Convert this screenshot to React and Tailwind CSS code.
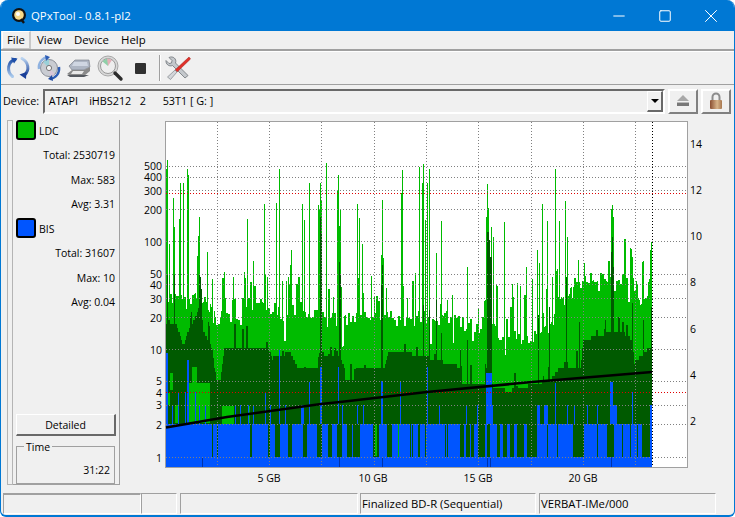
import { Minus, Square, X } from "lucide-react";

const FONT = "font-['Open_Sans','Noto_Sans',sans-serif]";

// zoom crops were read at 3x, these turn crop coords back into page coords
const z6 = (a) => a.map(([x, y]) => [160 + x / 3, 120 + y / 3]);
const z8 = (a) => a.map(([x, y]) => [420 + x / 3, 120 + y / 3]);
const z11 = (a) => a.map(([x, y]) => [318 + x / 3, 150 + y / 3]);

const brightSpikes = [
  ...z6([[22, 120], [18, 148], [20, 148], [28, 372], [40, 235], [43, 320], [58, 297], [61, 190], [70, 190], [82, 148], [85, 165], [112, 408], [118, 290], [115, 348], [142, 397], [140, 465], [155, 478], [193, 457], [220, 472], [253, 457], [262, 297], [280, 423], [313, 252], [320, 470], [349, 250], [358, 148], [366, 483], [378, 483], [385, 472], [390, 435], [394, 390], [427, 252], [433, 300], [448, 190], [475, 255], [478, 270], [481, 190], [484, 240], [499, 130], [533, 210], [535, 165], [538, 318]]),
  ...z11([[7, 100], [25, 40], [45, 440], [58, 120], [61, 75], [64, 230], [66, 178], [118, 162], [121, 385], [124, 205], [133, 282], [136, 428], [160, 378], [168, 440], [190, 315], [193, 150], [196, 325], [205, 415], [248, 130], [253, 60], [268, 445], [290, 370], [304, 52], [313, 98], [316, 42], [328, 100]]),
  ...z8([[7, 190], [10, 133], [15, 300], [20, 190], [28, 148], [49, 400], [64, 303], [80, 540], [97, 525], [142, 442], [173, 565], [198, 290], [202, 193], [205, 265], [212, 320], [218, 350], [253, 307], [275, 492], [290, 490], [300, 497], [318, 442], [335, 478], [352, 390], [358, 430], [367, 253], [380, 303], [397, 470], [406, 148], [418, 303], [436, 243], [440, 350], [460, 500], [475, 420], [492, 428], [572, 268], [575, 255], [578, 290], [636, 410], [670, 433], [690, 390], [693, 365]]),
];

const darkSpikes = [
  ...z6([[20, 465], [43, 465], [118, 465], [480, 290], [482, 340], [538, 425]]),
  ...z8([[10, 555], [28, 570], [48, 540], [64, 640], [142, 660], [200, 335], [203, 335], [206, 360], [209, 410], [212, 410], [355, 585], [388, 560], [438, 470], [478, 605], [555, 600], [572, 395], [575, 350], [578, 440], [636, 550], [670, 600], [693, 560]]),
  ...z11([[7, 200], [10, 250], [64, 335], [66, 375], [190, 405], [193, 345]]),
];

const brightTop = [[166, 295], [175, 298], [190, 297], [205, 295], [212, 310], [215, 328], [219, 328], [222, 308], [250, 305], [262, 307], [268, 313], [290, 313], [305, 312], [320, 318], [340, 322], [360, 318], [400, 318], [430, 318], [460, 322], [484, 325], [490, 320], [500, 338], [540, 338], [550, 325], [560, 305], [570, 288], [585, 280], [600, 278], [635, 285], [640, 298], [645, 295], [652, 275]];

const darkTop = [[166, 325], [176, 325], [183, 345], [188, 330], [196, 315], [200, 300], [203, 332], [210, 345], [212, 352], [216, 380], [220, 380], [222, 362], [224, 349], [268, 349], [272, 358], [290, 352], [297, 367], [318, 367], [322, 355], [340, 358], [344, 368], [345, 381], [355, 381], [356, 367], [384, 367], [388, 350], [418, 355], [460, 367], [461, 382], [484, 382], [485, 365], [490, 385], [510, 392], [530, 385], [550, 380], [557, 370], [580, 368], [583, 340], [612, 332], [620, 330], [632, 340], [634, 362], [652, 345]];

// columns of bright green that sit in front of the dark area, left of the scan
const z7r = (x0, x1, y0, y1) => [160 + x0 / 3, 160 + x1 / 3, 290 + y0 / 3, 290 + y1 / 3];
const brightBlocks = [
  z7r(30, 40, 250, 300), z7r(20, 30, 310, 345), z7r(45, 55, 345, 400), z7r(97, 113, 230, 280),
  z7r(87, 130, 280, 400), z7r(128, 150, 280, 400), z7r(185, 220, 348, 402), z7r(265, 272, 348, 400),
  z7r(72, 80, 403, 500), z7r(195, 198, 403, 500), z7r(245, 249, 403, 500), z7r(300, 308, 403, 500),
  z7r(370, 373, 403, 500), z7r(645, 652, 403, 500), [398, 399, 424, 457],
];

// gaps in the blue block, [x0, x1] in page px
const n7 = [[155, 158], [172, 174], [270, 275], [325, 330], [345, 358], [385, 395], [430, 440], [470, 485], [505, 515], [530, 545], [580, 590], [640, 655], [680, 695], [715, 717], [750, 753], [775, 778]].map(([a, b]) => [160 + a / 3, 160 + b / 3]);
const n5 = [[20, 35], [45, 60], [100, 110], [150, 153], [215, 218], [255, 258], [315, 318], [321, 324], [360, 372], [378, 390], [394, 400], [415, 435], [440, 450], [470, 480], [490, 500], [510, 520], [530, 550], [560, 590], [620, 623], [650, 653], [700, 730], [770, 773], [800, 820], [845, 848], [870, 873], [890, 893], [905, 930]].map(([a, b]) => [340 + a / 3, 340 + b / 3]);

// blue spikes above the block, [x, width, top]
const blueSpikes = [
  [166, 2, 353], [172, 1, 405], [178, 1, 392], [185, 1, 392], [187, 2, 360], [195, 1, 392], [199, 1, 405], [205, 1, 405],
  [235, 1, 405], [240, 1, 405], [248, 1, 405], [253, 1, 405], [265, 1, 392], [270, 1, 405], [279, 1, 350], [285, 1, 405],
  [301, 3, 405], [309, 1, 382], [320, 2, 367], [338, 1, 367], [357, 1, 405], [363, 1, 405], [381, 1, 381], [400, 1, 381],
  [342, 1, 405], [382, 1, 382], [400, 1, 382], [427, 1, 367], [477, 1, 405], [486, 6, 373], [487, 6, 405], [537, 3, 405],
  [544, 4, 405], [555, 1, 383], [567, 1, 405], [574, 1, 405], [587, 1, 405], [597, 1, 405], [610, 3, 382], [613, 4, 405],
  [632, 1, 392], [650, 2, 405], [466, 1, 405], [439, 1, 405],
];

function lerp(points, x) {
  for (let i = 1; i < points.length; i++) {
    if (x <= points[i][0]) {
      const [x0, y0] = points[i - 1];
      const [x1, y1] = points[i];
      return y0 + ((y1 - y0) * (x - x0)) / (x1 - x0 || 1);
    }
  }
  return points[points.length - 1][1];
}

function buildChart() {
  let seed = 4711;
  const rnd = () => {
    seed = (seed * 16807) % 2147483647;
    return seed / 2147483647;
  };
  const bright = {};
  const dark = {};
  let lastB = 0;
  let lastD = 0;
  for (let x = 166; x < 652; x++) {
    // noise holds for two columns, the scan is coarser than a pixel
    if (x % 2 === 0) {
      lastB = (rnd() - 0.5) * 16;
      if (rnd() < 0.22) lastB -= rnd() * 42;
      if (rnd() < 0.1) lastB += rnd() * 24;
      lastD = rnd() < 0.16 ? -rnd() * 24 : 0;
    }
    bright[x] = lerp(brightTop, x) + lastB;
    dark[x] = Math.round(lerp(darkTop, x) / 4) * 4 + lastD;
  }
  const apply = (col, list) =>
    list.forEach(([x, y]) => {
      const k = Math.round(x);
      if (col[k] !== undefined) col[k] = Math.min(col[k], y);
    });
  apply(bright, brightSpikes);
  apply(dark, darkSpikes);

  const gaps = [...n7, ...n5];
  const isGap = (x) => gaps.some(([a, b]) => x >= a - 0.5 && x < b);
  let brightD = "";
  let darkD = "";
  let blueD = "";
  for (let x = 166; x < 652; x++) {
    brightD += `M${x + 0.5} ${bright[x].toFixed(0)}V467`;
    darkD += `M${x + 0.5} ${dark[x].toFixed(0)}V467`;
    blueD += isGap(x) ? `M${x + 0.5} 457V467` : `M${x + 0.5} 424V467`;
  }
  blueSpikes.forEach(([x, w, top]) => {
    for (let i = 0; i < w; i++) blueD += `M${x + i + 0.5} ${top}V424`;
  });
  return { brightD, darkD, blueD };
}

const chart = buildChart();

const leftTicks = [
  ["1", 458], ["2", 425], ["3", 405], ["4", 393], ["5", 381], ["10", 350], ["20", 318], ["30", 299], ["40", 285], ["50", 274],
  ["100", 242], ["200", 210], ["300", 191], ["400", 177], ["500", 166],
];
const rightTicks = [["14", 144], ["12", 190], ["10", 236], ["8", 282], ["6", 329], ["4", 375], ["2", 421]];
const hLines = [166.5, 177.5, 190.5, 209.5, 241.5, 274.5, 284.5, 298.5, 317.5, 349.5, 381.5, 405.5, 424.5, 457.5];
const vLines = [217.5, 269.5, 321.5, 374.5, 426.5, 478.5, 531.5, 583.5, 635.5];
const gbTicks = [["5 GB", 269], ["10 GB", 373], ["15 GB", 478], ["20 GB", 583]];

function Chart() {
  return (
    <svg viewBox="120 115 614 376" className={`h-[376px] w-[614px] shrink-0 ${FONT}`}>
      <rect x="165.5" y="121.5" width="522" height="346" fill="#ffffff" stroke="#a0a0a0" />
      <g shapeRendering="crispEdges" fill="none" strokeWidth="1">
        <path d={chart.brightD} stroke="#00bb00" />
        <path d={chart.darkD} stroke="#005a00" />
        {brightBlocks.map(([x0, x1, y0, y1], i) => (
          <rect key={i} x={Math.round(x0)} y={Math.round(y0)} width={Math.max(1, Math.round(x1 - x0))} height={Math.round(y1 - y0)} fill="#00bb00" />
        ))}
        <path d={chart.blueD} stroke="#0055ff" />
        <path d="M202.5 457V467M382.5 457V467M487.5 457V467M490.5 457V467M611.5 457V467M339.5 457V467" stroke="#0033aa" />
        {hLines.map((y) => (
          <line key={y} x1="166" x2="687" y1={y} y2={y} stroke="#808080" strokeDasharray="1 2" />
        ))}
        {vLines.map((x) => (
          <line key={x} x1={x} x2={x} y1="122" y2="467" stroke="#808080" strokeDasharray="1 2" />
        ))}
        <line x1="166" x2="687" y1="193.5" y2="193.5" stroke="#e00000" strokeDasharray="1 2" />
        <line x1="166" x2="687" y1="392.5" y2="392.5" stroke="#e00000" strokeDasharray="1 2" />
        <line x1="652.5" x2="652.5" y1="122" y2="467" stroke="#000000" strokeDasharray="1 2" />
      </g>
      <polyline points="166,427.5 227,417 321,404 340,402 427,392 532,382 652,372" fill="none" stroke="#000000" strokeWidth="2.6" />
      <g fill="#000000" fontSize="10.5">
        {leftTicks.map(([t, y]) => (
          <text key={t} x="162" y={y + 4} textAnchor="end">{t}</text>
        ))}
        {rightTicks.map(([t, y]) => (
          <text key={t} x="690" y={y + 4}>{t}</text>
        ))}
        {gbTicks.map(([t, x]) => (
          <text key={t} x={x} y="482" textAnchor="middle">{t}</text>
        ))}
      </g>
    </svg>
  );
}

function RefreshIcon() {
  return (
    <svg width="26" height="26" viewBox="0 0 26 26" fill="none">
      <defs>
        <linearGradient id="ra" x1="0" y1="0" x2="0" y2="1">
          <stop offset="0" stopColor="#1e4fa8" />
          <stop offset="1" stopColor="#a9c9ec" />
        </linearGradient>
        <linearGradient id="rb" x1="0" y1="0" x2="0" y2="1">
          <stop offset="0" stopColor="#b9d3f0" />
          <stop offset="1" stopColor="#1a3f98" />
        </linearGradient>
      </defs>
      <path d="M10 4.500C3 6.500 1 16 7.500 21.500" stroke="url(#ra)" strokeWidth="3" strokeLinecap="round" />
      <path d="M6 2.500l6.500 1-3.500 5z" fill="#1e4fa8" />
      <path d="M17 3.500C23.500 7 25 15 19.500 20" stroke="url(#rb)" strokeWidth="3" strokeLinecap="round" />
      <path d="M14.500 19.500l7 -2.500-.5 7z" fill="#1a3f98" />
    </svg>
  );
}

function DiscIcon() {
  return (
    <svg width="26" height="26" viewBox="0 0 26 26" fill="none">
      <circle cx="13" cy="13" r="8.500" fill="#c9ccd2" stroke="#8a8f98" />
      <path d="M13 13L7 7a8.500 8.500 0 0 1 6-2.500z" fill="#9ad0d8" />
      <path d="M13 13l6 6a8.500 8.500 0 0 1-5 2.400z" fill="#d8c7d8" />
      <circle cx="13" cy="13" r="2.600" fill="#f4f4f4" stroke="#777" />
      <path d="M3 14C2 8 6 3 12 2" stroke="#8fb2e0" strokeWidth="2.400" />
      <path d="M9 0l5 2-4 4z" fill="#2d5db5" />
      <path d="M23 12c1 6-3 11-9 12" stroke="#2d5db5" strokeWidth="2.400" />
      <path d="M17 26l-5-2 4-4z" fill="#1f4aa0" />
    </svg>
  );
}

function DriveIcon() {
  return (
    <svg width="26" height="26" viewBox="0 0 26 26" fill="none">
      <path d="M3 11L9 5h14l1 7-6 3H6z" fill="#aeb6c4" stroke="#70767f" strokeWidth=".6" />
      <path d="M8 7h13l1 4H6z" fill="#cfd6e2" />
      <path d="M1 19l5-4h12l6-3v4l-6 5H5z" fill="#8a8a8a" />
      <path d="M7 16h11l-2 3H5z" fill="#e8e8e8" />
      <path d="M1 20h22l-5 2H4z" fill="#55595f" />
    </svg>
  );
}

function ScanIcon() {
  return (
    <svg width="27" height="27" viewBox="0 0 27 27" fill="none">
      <circle cx="11" cy="11" r="10" fill="#d8d8d8" stroke="#a8a8a8" />
      <circle cx="11" cy="11" r="7.500" fill="#eeeeee" stroke="#9a9a9a" />
      <path d="M11 11L5.500 6.500A7.500 7.500 0 0 1 12 3.500z" fill="#8fcfa8" />
      <path d="M11 11l-1-7.500a7.500 7.500 0 0 1 5 1.500z" fill="#e2b0b8" />
      <path d="M18 18l6 6" stroke="#2c2c2c" strokeWidth="3.400" strokeLinecap="round" />
    </svg>
  );
}

function ToolsIcon() {
  return (
    <svg width="28" height="28" viewBox="0 0 28 28" fill="none">
      <path d="M5 3.500l3 3-.5 2.500-2.500.5-3-3C1.500 10 5 13 8.500 11.500L21 24l3-2.500L11.500 9C13 5 9 1.500 5 3.500z" fill="#c4c8cc" stroke="#6e7378" strokeWidth=".8" />
      <path d="M25 3l1.500 2L13 18l-2-2z" fill="#e0302a" stroke="#a01810" strokeWidth=".5" />
      <path d="M11 16l2 2-6.500 7.500-3-2.500z" fill="#d3d6da" stroke="#70757a" strokeWidth=".6" />
    </svg>
  );
}

function EjectIcon() {
  return (
    <svg width="16" height="14" viewBox="0 0 16 14">
      <path d="M8 1l6 6H2z" fill="#a8a8a8" />
      <rect x="2" y="8" width="12" height="4" fill="#777777" />
      <rect x="2" y="8" width="12" height="1" fill="#b8b8b8" />
    </svg>
  );
}

function LockIcon() {
  return (
    <svg width="16" height="20" viewBox="0 0 16 20" fill="none">
      <path d="M4.500 9V6a3.500 3.500 0 0 1 7 0v3" stroke="#8c8c8c" strokeWidth="2" />
      <defs>
        <linearGradient id="lk" x1="0" y1="0" x2="1" y2="0">
          <stop offset="0" stopColor="#8a4f32" />
          <stop offset=".6" stopColor="#d8b48a" />
          <stop offset="1" stopColor="#a87850" />
        </linearGradient>
      </defs>
      <rect x="2" y="9" width="12" height="9" rx="1" fill="url(#lk)" />
    </svg>
  );
}

function AppIcon() {
  return (
    <svg width="16" height="18" viewBox="0 0 16 18">
      <circle cx="8" cy="8" r="7" fill="#111111" />
      <circle cx="8" cy="8" r="4.800" fill="#f6d98a" />
      <circle cx="7" cy="7" r="2" fill="#ffffff" />
      <path d="M10 12l3 4" stroke="#111111" strokeWidth="2.400" />
    </svg>
  );
}

function StatRow({ label, value }) {
  return (
    <div className="box-border flex h-[24.5px] shrink-0 items-center justify-end pr-[4px] pt-[1px]">
      {label}: {value}
    </div>
  );
}

function Legend({ color, name, className }) {
  return (
    <div className={`flex h-[22.5px] shrink-0 items-start gap-[3px] pl-[3px] ${className}`}>
      <span className={`box-border h-[20px] w-[20px] rounded-[3px] border-2 border-black ${color}`} />
      <span className="mt-[6px]">{name}</span>
    </div>
  );
}

function LeftPanel() {
  return (
    <div className="ml-[6px] mt-[5px] flex h-[365px] w-[113px] shrink-0">
      <div className="w-[6px] border-x border-t border-b border-[#b4b4b4]" />
      <div className="flex w-[107px] flex-col border-r border-b border-[#a0a0a0]">
        <Legend color="bg-[#00bb00]" name="LDC" />
        <StatRow label="Total" value="2530719" />
        <StatRow label="Max" value="583" />
        <StatRow label="Avg" value="3.31" />
        <Legend color="bg-[#0055ff]" name="BIS" className="mt-[2px]" />
        <StatRow label="Total" value="31607" />
        <StatRow label="Max" value="10" />
        <StatRow label="Avg" value="0.04" />
        <div className="flex-1" />
        <button className="ml-[3px] flex h-[22px] w-[100px] items-center justify-center border-b-2 border-r-2 border-t border-l border-b-[#696969] border-r-[#696969] border-t-white border-l-white bg-[#f0f0f0] pt-[2px]">
          Detailed
        </button>
        <div className="relative ml-[3px] mt-[10px] flex h-[38px] w-[99px] items-end justify-end border border-[#a0a0a0] pb-[8px] pr-[4px]">
          <span className="absolute -top-[6px] left-[7px] bg-[#f0f0f0] px-[2px] leading-[13px]">Time</span>
          31:22
        </div>
      </div>
    </div>
  );
}

function StatusCell({ className, children }) {
  return (
    <div className={`box-border flex h-[21px] items-center border-l border-t border-b border-r border-l-[#a0a0a0] border-t-[#a0a0a0] border-b-white border-r-white pl-[1px] ${className}`}>
      {children}
    </div>
  );
}

export default function App() {
  return (
    <div className={`flex h-[517px] w-[735px] flex-col overflow-hidden rounded-t-lg rounded-b-md border-b-2 border-l border-r border-[#0078d4] bg-[#f0f0f0] text-[10.5px] leading-none text-black ${FONT}`}>
      {/* title bar */}
      <div className="flex h-[31px] shrink-0 items-center bg-[#0078d4] text-white">
        <div className="ml-[10px] flex w-[20px]">
          <AppIcon />
        </div>
        <span className="text-[11.4px]">QPxTool - 0.8.1-pl2</span>
        <div className="ml-auto flex h-full items-center">
          <div className="flex w-[46px] justify-center"><Minus size={18} strokeWidth={1} absoluteStrokeWidth /></div>
          <div className="flex w-[46px] justify-center"><Square size={14} strokeWidth={1} absoluteStrokeWidth /></div>
          <div className="flex w-[46px] justify-center"><X size={22} strokeWidth={1} absoluteStrokeWidth /></div>
        </div>
      </div>

      {/* menu bar */}
      <div className="box-border flex h-[20px] shrink-0 items-center border-b-2 border-b-[#a0a0a0] pl-[1px] text-[11.4px]">
        <span className="flex h-[18px] w-[29px] items-center justify-center border-r-2 border-b border-r-[#c8c8c8] border-b-[#c8c8c8] border-t border-l border-t-white border-l-white">File</span>
        <span className="ml-[6px]">View</span>
        <span className="ml-[12px]">Device</span>
        <span className="ml-[12px]">Help</span>
      </div>

      {/* toolbar */}
      <div className="box-border flex h-[34px] shrink-0 items-center border-t border-b border-t-white border-b-[#a0a0a0] pl-[4px]">
        <RefreshIcon />
        <div className="ml-[5px]"><DiscIcon /></div>
        <div className="ml-[4px]"><DriveIcon /></div>
        <div className="ml-[5px]"><ScanIcon /></div>
        <div className="ml-[11px] h-[11px] w-[11px] rounded-[1px] bg-[#303030]" />
        <div className="ml-[13px] h-[26px] w-[2px] border-l border-r border-l-[#a0a0a0] border-r-white" />
        <div className="ml-[3px]"><ToolsIcon /></div>
      </div>

      {/* device row */}
      <div className="flex h-[30px] shrink-0 items-center pl-[2px] pt-[2px]">
        <span className="w-[40px] text-[10.8px]">Device:</span>
        <div className="box-border flex h-[25px] w-[622px] items-center border-2 border-t-[#696969] border-l-[#696969] border-b-white border-r-white bg-[#f0f0f0] pl-[1px] text-[10.8px]">
          <span className="flex-1 whitespace-pre"> ATAPI    iHBS212   2      53T1 [ G: ]</span>
          <div className="flex h-[21px] w-[16px] items-center justify-center border border-r-2 border-b-2 border-t-white border-l-white border-r-[#696969] border-b-[#696969]">
            <span className="h-0 w-0 border-x-[4px] border-t-[4px] border-x-transparent border-t-black" />
          </div>
        </div>
        <button className="ml-[3px] flex h-[25px] w-[30px] items-center justify-center border-2 border-t-white border-l-white border-r-[#808080] border-b-[#808080]">
          <EjectIcon />
        </button>
        <button className="ml-[3px] flex h-[25px] w-[30px] items-center justify-center border-2 border-t-white border-l-white border-r-[#808080] border-b-[#808080]">
          <LockIcon />
        </button>
      </div>

      {/* main */}
      <div className="flex h-[376px] shrink-0">
        <LeftPanel />
        <Chart />
      </div>

      {/* status bar */}
      <div className="mt-[2px] flex pl-[2px] text-[11.3px]">
        <StatusCell className="w-[138px] border-t-2" />
        <StatusCell className="w-[36px]" />
        <StatusCell className="ml-[3px] w-[178px]" />
        <StatusCell className="ml-[2px] w-[176px]">Finalized BD-R (Sequential)</StatusCell>
        <StatusCell className="ml-[3px] w-[177px]">VERBAT-IMe/000</StatusCell>
      </div>
    </div>
  );
}
